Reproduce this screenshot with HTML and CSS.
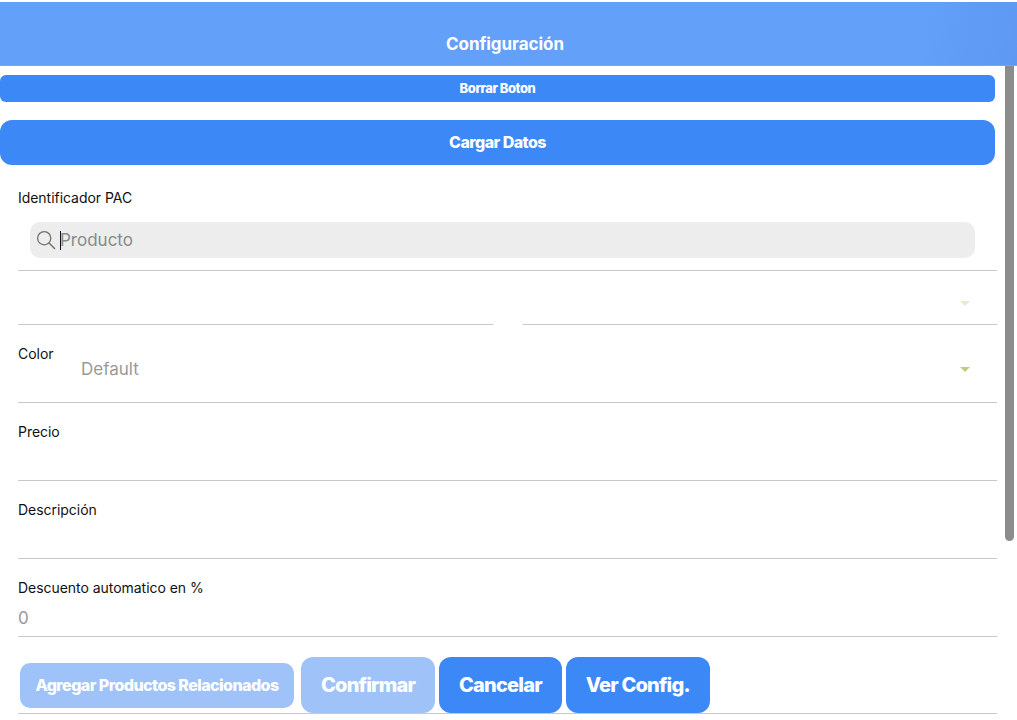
FILE: index.html
```html
<!DOCTYPE html>
<html lang="es">
<head>
<meta charset="utf-8">
<title>Configuración</title>
<link rel="stylesheet" href="styles.css">
</head>
<body>
<div class="app">
  <header class="topbar"><h1 class="topbar-title">Configuración</h1></header>
  <main class="content">
    <button class="btn-wide btn-small">Borrar Boton</button>
    <button class="btn-wide btn-large">Cargar Datos</button>
    <div class="form">
      <section class="item item-search">
        <label class="label">Identificador PAC</label>
        <div class="searchbar">
          <svg class="search-icon" viewBox="0 0 20 20" width="20" height="20" aria-hidden="true">
            <circle cx="8.2" cy="8.2" r="6.6" fill="none" stroke="#6f6f6f" stroke-width="1.3"/>
            <path d="M13 13l5.6 5.6" fill="none" stroke="#6f6f6f" stroke-width="1.4" stroke-linecap="round"/>
          </svg>
          <span class="caret"></span>
          <span class="placeholder">Producto</span>
        </div>
      </section>
      <section class="split">
        <div class="split-cell"></div>
        <div class="split-cell split-select"><span class="arrow arrow-faded"></span></div>
      </section>
      <section class="item item-color">
        <label class="label">Color</label>
        <div class="select-row"><span class="select-text">Default</span><span class="arrow"></span></div>
      </section>
      <section class="item item-plain">
        <label class="label">Precio</label>
      </section>
      <section class="item item-plain">
        <label class="label">Descripción</label>
      </section>
      <section class="item item-plain">
        <label class="label">Descuento automatico en %</label>
        <div class="value">0</div>
      </section>
      <section class="actions">
        <button class="btn btn-related">Agregar Productos Relacionados</button>
        <button class="btn btn-disabled">Confirmar</button>
        <button class="btn">Cancelar</button>
        <button class="btn">Ver Config.</button>
      </section>
    </div>
    <div class="scroll-thumb"></div>
  </main>
</div>
</body>
</html>
```

FILE: styles.css
```css
* { box-sizing: border-box; }
html, body { margin: 0; height: 100%; overflow: hidden; background: #fff; }
body { font-family: Inter, "Liberation Sans", sans-serif; color: #000; }
.app { display: flex; flex-direction: column; height: 720px; padding-top: 2px; }
.topbar {
  height: 64px;
  background: linear-gradient(100deg, #62a0fa 0%, #62a0fa 90%, #5e98f2 100%);
  border-bottom: 1px solid #8aa4c8;
  display: flex;
  align-items: flex-end;
  justify-content: center;
  padding: 0 7px 11px 0;
}
.topbar-title { margin: 0; font-size: 17px; line-height: 20px; font-weight: 700; letter-spacing: -0.05px; color: #fff; }
.content { position: relative; flex: 1; padding-top: 9px; overflow: hidden; }
button { font-family: inherit; border: 0; color: #fff; background: #3b88f6; font-weight: 800; padding: 0; }
.btn-wide { display: block; width: 995px; }
.btn-small { height: 27px; border-radius: 6px; font-size: 13px; letter-spacing: -0.45px; padding-bottom: 1px; }
.btn-large { height: 45px; margin-top: 18px; border-radius: 12px; font-size: 16px; letter-spacing: -0.55px; padding-bottom: 2px; }
.form { padding-left: 18px; width: 997px; }
.item { border-bottom: 1px solid #c8c8c8; }
.label { display: block; font-size: 14px; line-height: 17px; letter-spacing: -0.04px; color: #111; }
.item-search { height: 106px; padding-top: 24px; }
.searchbar {
  display: flex;
  align-items: center;
  height: 36px;
  margin: 16px 4px 0 12px;
  width: 945px;
  background: #ededed;
  border-radius: 10px;
  padding-left: 6px;
  font-size: 17px;
}
.search-icon { flex: none; margin-right: 4px; }
.caret { flex: none; width: 1px; height: 19px; background: #111; margin-right: -1px; }
.placeholder { color: #8a8a8a; }
.split { display: grid; grid-template-columns: 1fr 1fr; gap: 30px; height: 54px; }
.split-cell { border-bottom: 1px solid #c8c8c8; position: relative; }
.split-select { display: flex; align-items: center; justify-content: flex-end; padding: 11px 27px 0 0; }
.arrow { width: 0; height: 0; border-left: 5px solid transparent; border-right: 5px solid transparent; border-top: 5px solid #bccf7e; }
.arrow-faded { border-top-color: #e6ebcf; }
.item-color { height: 78px; padding-top: 20px; }
.select-row { display: flex; align-items: center; justify-content: space-between; padding: 0 27px 0 63px; margin-top: -3px; height: 20px; }
.select-text { font-size: 17px; color: #999; }
.item-plain { height: 78px; padding-top: 20px; }
.value { font-size: 17px; line-height: 20px; color: #999; margin-top: 12px; }
.actions { display: flex; align-items: flex-end; height: 77px; border-bottom: 1px solid #c8c8c8; padding-left: 2px; gap: 4px; }
.btn { height: 56px; padding: 0 20px; border-radius: 12px; font-size: 20px; letter-spacing: -0.8px; background: #3b88f6; white-space: nowrap; }
.btn-related { height: 45px; margin-bottom: 5px; margin-right: 3px; width: 274px; padding: 0 0 2px; font-size: 16px; letter-spacing: -0.55px; background: #9fc3f9; border-radius: 10px; }
.btn-disabled { background: #9fc3f9; }
.scroll-thumb { position: absolute; top: 0; left: 1005px; width: 9px; height: 475px; background: #8c8c8c; border-radius: 0 0 5px 5px; }
```
